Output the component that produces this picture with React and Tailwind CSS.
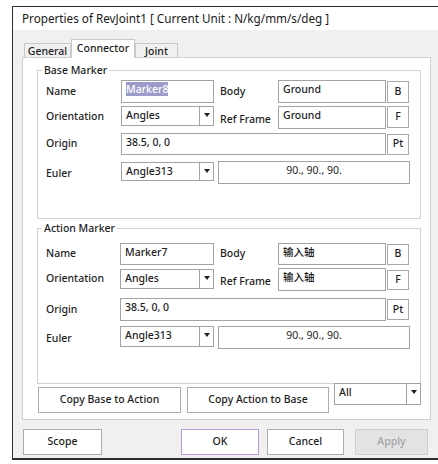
import React from "react";

const ui = "font-['Noto_Sans','Noto_Sans_CJK_SC',sans-serif]";

// white edit box, text sits at the top like a Win32 edit control
const Field = ({ value, w, h, center, selected }) => (
  <div
    className={`bg-white border border-[#a3a3a3] px-[4px] pt-[1px] text-[10.5px] leading-[15px] text-[#1e1e1e] ${center ? "text-center font-normal" : "font-medium"}`}
    style={{ width: w, height: h }}
  >
    {selected ? <span className="bg-[#9c9ccc] text-white">{value}</span> : value}
  </div>
);

const Combo = ({ value, w, h }) => (
  <div className="flex bg-white border border-[#a3a3a3]" style={{ width: w, height: h }}>
    <div className="flex-1 px-[4px] pt-[1px] text-[10.5px] leading-[15px] font-medium text-[#1e1e1e]">{value}</div>
    <div className="w-[14px] border-l border-[#a3a3a3] flex items-start justify-center pt-[6px]">
      <div className="w-0 h-0 border-l-[3px] border-r-[3px] border-t-[4px] border-l-transparent border-r-transparent border-t-[#222]" />
    </div>
  </div>
);

const SmallBtn = ({ label, h }) => (
  <div
    className="w-[22px] flex items-center justify-center bg-white border border-[#a8a8a8] text-[10.5px] font-medium text-[#1e1e1e]"
    style={{ height: h }}
  >
    {label}
  </div>
);

const Label = ({ text, w, className = "" }) => (
  <div className={`text-[10.5px] font-medium text-[#1e1e1e] whitespace-nowrap ${className}`} style={{ width: w }}>
    {text}
  </div>
);

const MarkerGroup = ({ title, rows, className }) => (
  <fieldset className={`border border-[#d2d2d2] ml-[14px] w-[384px] ${className}`}>
    <legend className="ml-[4px] px-[2px] text-[10.5px] leading-[16px] font-medium text-[#1e1e1e]">{title}</legend>
    {rows}
  </fieldset>
);

const Tab = ({ label, active, w }) => (
  <div
    className={`flex justify-center border border-b-0 border-[#c9c9c9] text-[10.5px] font-medium text-[#1e1e1e] ${
      active ? "h-[19px] -mb-[1px] bg-white relative z-10 pt-[1px]" : "h-[14px] bg-[#f0f0f0] leading-[14px]"
    }`}
    style={{ width: w }}
  >
    {label}
  </div>
);

const Button = ({ label, w, className = "" }) => (
  <div
    className={`h-[26px] flex items-center justify-center border text-[10.5px] font-medium ${className}`}
    style={{ width: w }}
  >
    {label}
  </div>
);

export default function App() {
  const base = (
    <div className="pl-[8px] pt-[2px]">
      <div className="flex items-center h-[23px]">
        <Label text="Name" w={75} />
        <Field value="Marker8" w={93} h={23} selected />
        <Label text="Body" w={64} className="pl-[6px]" />
        <Field value="Ground" w={108} h={23} />
        <div className="ml-[1px]"><SmallBtn label="B" h={22} /></div>
      </div>
      <div className="flex items-start h-[23px] mt-[3px]">
        <Label text="Orientation" w={75} className="pt-[3px]" />
        <Combo value="Angles" w={93} h={20} />
        <Label text="Ref Frame" w={64} className="pl-[6px] pt-[6px]" />
        <Field value="Ground" w={108} h={23} />
        <div className="ml-[1px]"><SmallBtn label="F" h={22} /></div>
      </div>
      <div className="flex items-center h-[22px] mt-[4px]">
        <Label text="Origin" w={75} />
        <Field value="38.5, 0, 0" w={265} h={22} />
        <div className="ml-[1px]"><SmallBtn label="Pt" h={21} /></div>
      </div>
      <div className="flex items-start h-[23px] mt-[6px]">
        <Label text="Euler" w={75} className="pt-[5px]" />
        <div className="pt-[1px]"><Combo value="Angle313" w={93} h={19} /></div>
        <div className="ml-[4px]"><Field value="90., 90., 90." w={192} h={23} center /></div>
      </div>
    </div>
  );

  const action = (
    <div className="pl-[8px] pt-[7px]">
      <div className="flex items-center h-[22px]">
        <Label text="Name" w={74} />
        <Field value="Marker7" w={94} h={22} />
        <Label text="Body" w={64} className="pl-[6px]" />
        <Field value="输入轴" w={108} h={22} />
        <div className="ml-[1px]"><SmallBtn label="B" h={21} /></div>
      </div>
      <div className="flex items-start h-[23px] mt-[3px]">
        <Label text="Orientation" w={74} className="pt-[3px]" />
        <div className="pt-[1px]"><Combo value="Angles" w={94} h={20} /></div>
        <Label text="Ref Frame" w={64} className="pl-[6px] pt-[6px]" />
        <Field value="输入轴" w={108} h={23} />
        <div className="ml-[1px] pt-[2px]"><SmallBtn label="F" h={20} /></div>
      </div>
      <div className="flex items-center h-[23px] mt-[7px]">
        <Label text="Origin" w={74} />
        <Field value="38.5, 0, 0" w={266} h={23} />
        <div className="ml-[1px]"><SmallBtn label="Pt" h={21} /></div>
      </div>
      <div className="flex items-start h-[23px] mt-[5px]">
        <Label text="Euler" w={74} className="pt-[5px]" />
        <Combo value="Angle313" w={94} h={21} />
        <div className="ml-[4px]"><Field value="90., 90., 90." w={192} h={23} center /></div>
      </div>
    </div>
  );

  return (
    <div className={`w-[438px] h-[464px] bg-white pt-[6px] pl-[12px] overflow-hidden ${ui}`}>
      <div className="w-[426px] h-[454px] border-l border-t border-b-2 border-[#2e2e2e] bg-[#f0f0f0] flex flex-col">
        {/* caption */}
        <div className="h-[23px] bg-white pl-[9px] flex items-center text-[11.7px] text-[#1a1a1a] whitespace-nowrap">
          Properties of RevJoint1 [ Current Unit : N/kg/mm/s/deg ]
        </div>

        <div className="pl-[9px] pt-[9px]">
          {/* tab strip */}
          <div className="flex items-end h-[18px] pl-[2px]">
            <Tab label="General" w={47} />
            <Tab label="Connector" w={64} active />
            <Tab label="Joint" w={43} />
          </div>

          {/* tab page */}
          <div className="w-[409px] h-[363px] bg-white border border-[#cfcfcf]">
            <MarkerGroup title="Base Marker" className="mt-[4px] h-[157px]" rows={base} />
            <MarkerGroup title="Action Marker" className="mt-[1px] h-[164px]" rows={action} />

            <div className="flex items-start ml-[15px]">
              <Button label="Copy Base to Action" w={143} className="mt-[3px] h-[23px] bg-white border-[#adadad] text-[#1e1e1e]" />
              <Button label="Copy Action to Base" w={142} className="mt-[3px] ml-[6px] h-[23px] bg-white border-[#adadad] text-[#1e1e1e]" />
              <div className="ml-[5px] -mt-[1px]">
                <Combo value="All" w={87} h={22} />
              </div>
            </div>
          </div>

          {/* dialog buttons */}
          <div className="flex mt-[9px] pl-[1px]">
            <Button label="Scope" w={79} className="bg-white border-[#adadad] text-[#1e1e1e]" />
            <Button label="OK" w={78} className="ml-[79px] bg-white border-[#b79ad6] text-[#1e1e1e]" />
            <Button label="Cancel" w={77} className="ml-[8px] bg-white border-[#adadad] text-[#1e1e1e]" />
            <Button label="Apply" w={73} className="ml-[11px] bg-[#e3e3e3] border-[#cfcfcf] text-[#a3a3a3]" />
          </div>
        </div>
      </div>
    </div>
  );
}
